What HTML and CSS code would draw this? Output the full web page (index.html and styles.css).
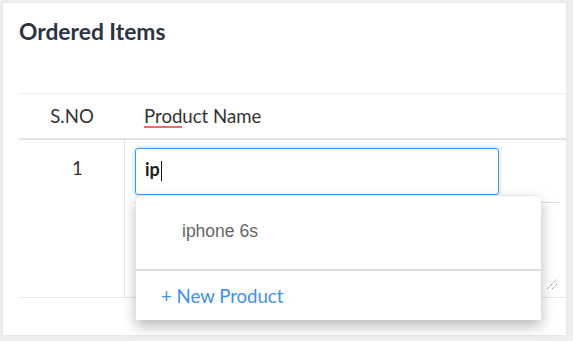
FILE: index.html
```html
<!DOCTYPE html>
<html>
<head>
<meta charset="utf-8">
<link rel="stylesheet" href="styles.css">
</head>
<body>
<div class="card">
  <h2 class="title">Ordered Items</h2>
  <div class="table">
    <div class="head">
      <div class="th sno">S.NO</div>
      <div class="th name"><span class="spell">Prod</span>uct Name</div>
    </div>
    <div class="row">
      <div class="td sno">1</div>
      <div class="td name">
        <div class="input">ip<span class="caret"></span></div>
        <div class="textarea">
          <svg class="grip" width="12" height="12" viewBox="0 0 12 12"><path d="M1 11 L11 1 M6 11 L11 6" stroke="#777" stroke-width="1" stroke-dasharray="1 1" fill="none"/></svg>
        </div>
      </div>
    </div>
  </div>
  <div class="dropdown">
    <div class="option">iphone 6s</div>
    <div class="new">+ New Product</div>
  </div>
</div>
</body>
</html>
```
FILE: styles.css
```css
html, body { margin: 0; padding: 0; }
body {
  background: #efefef;
  padding: 3px 7px 6px 3px;
  width: 573px;
  height: 341px;
  box-sizing: border-box;
  font-family: Lato, "Open Sans", sans-serif;
}
.card {
  position: relative;
  background: #fff;
  height: 332px;
  box-sizing: border-box;
  padding: 15px 0 0 16px;
  box-shadow: 0 0 3px rgba(0,0,0,0.08);
}
.title {
  margin: 0 0 49px 0;
  font-size: 22.8px;
  line-height: 26px;
  font-weight: 700;
  color: #2b3443;
}
.table { border-top: 1px solid #efefef; }
.head {
  display: grid;
  grid-template-columns: 106px 1fr;
  height: 44px;
  border-bottom: 2px solid #e4e4e4;
  align-items: center;
  color: #333;
  font-size: 18.6px;
}
.th.sno { text-align: center; }
.th.name { padding-left: 19px; }
.spell { border-bottom: 2px solid #ef6a6a; line-height: 19px; display: inline-block; }
.row {
  display: grid;
  grid-template-columns: 106px 1fr;
  height: 157px;
  border-bottom: 1px solid #e6e6e6;
}
.td.sno {
  text-align: center;
  font-size: 18.6px;
  color: #333;
  padding: 17px 0 0 12px;
  border-right: 1px solid #e6e6e6;
}
.td.name { padding: 8px 7px 0 10px; }
.input {
  height: 47px;
  width: 364px;
  box-sizing: border-box;
  border: 1px solid #3d97f2;
  border-radius: 3px;
  box-shadow: 0 0 4px rgba(61,151,242,0.45);
  padding: 8px 9px;
  font-size: 18px;
  font-weight: 700;
  color: #222;
  line-height: 24px;
}
.caret {
  display: inline-block;
  width: 1px;
  height: 20px;
  background: #111;
  vertical-align: -5px;
  margin-left: 1px;
}
.textarea {
  position: relative;
  margin-top: 7px;
  height: 90px;
  width: 425px;
  box-sizing: border-box;
  border-top: 1px solid #dcdcdc;
}
.grip { position: absolute; right: 2px; bottom: 2px; }
.dropdown {
  position: absolute;
  left: 133px;
  top: 192px;
  width: 405px;
  background: #fff;
  border-radius: 6px 6px 0 0;
  box-shadow: 0 6px 14px rgba(0,0,0,0.28);
  border-top: 1px solid #e6e6e6;
}
.option {
  height: 75px;
  box-sizing: border-box;
  padding: 25px 0 0 46px;
  font-family: "Liberation Sans", Arial, sans-serif;
  font-size: 17.5px;
  color: #666;
  border-bottom: 2px solid #dedede;
}
.new {
  height: 49px;
  padding: 14px 0 0 25px;
  box-sizing: border-box;
  font-size: 18.6px;
  color: #3d8ff0;
}
```
